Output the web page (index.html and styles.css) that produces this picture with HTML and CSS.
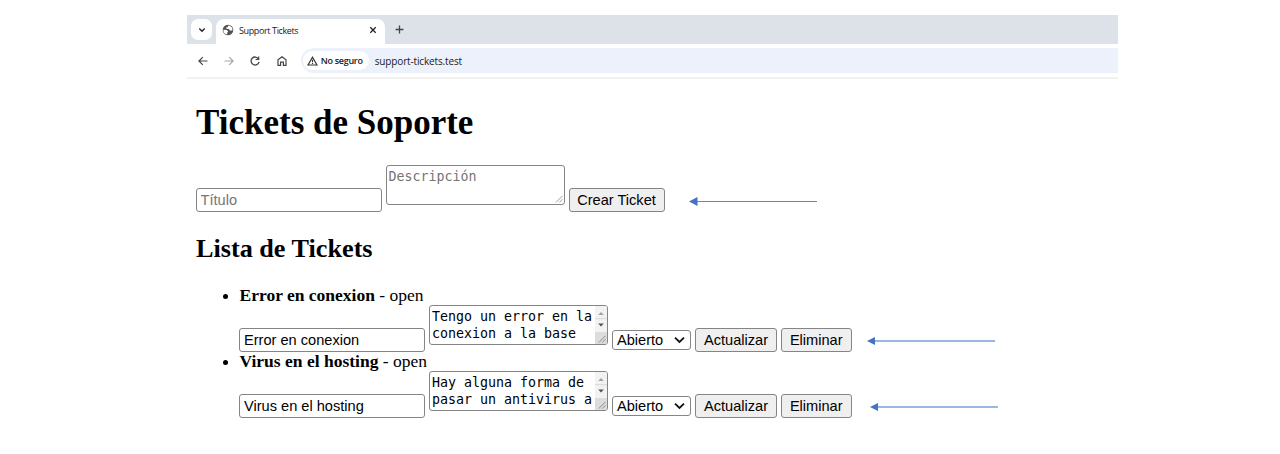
FILE: index.html
```
<!DOCTYPE html>
<html lang="es">
<head>
<meta charset="utf-8">
<title>Support Tickets</title>
<link rel="stylesheet" href="styles.css">
</head>
<body>
<div class="window">
  <header class="browser">
    <div class="tabstrip">
      <div class="tab-search"><svg width="8" height="8" viewBox="0 0 8 8"><path d="M1.3 2.6 4 5.2 6.7 2.6" fill="none" stroke="#222" stroke-width="1.4"/></svg></div>
      <div class="tab">
        <svg class="globe" width="12" height="12" viewBox="0 0 12 12"><circle cx="6" cy="6" r="5.3" fill="#50545a"/><path d="M1.4 5.8 4.8 6.1 6.2 7.4 5.3 8.3 5.2 10.5A4.4 4.4 0 0 1 1.4 5.8ZM6.5 1.6 5.6 3.2 4 3.6 4.7 5 7 5.1 7.8 6.4 10.4 6.6A4.4 4.4 0 0 0 8 2L6.5 1.6Z" fill="#fff"/></svg>
        <span class="tab-title">Support Tickets</span>
        <svg class="close" width="8" height="8" viewBox="0 0 8 8"><path d="M1.3 1.3 6.7 6.7M6.7 1.3 1.3 6.7" stroke="#222" stroke-width="1.3"/></svg>
      </div>
      <svg class="plus" width="9" height="9" viewBox="0 0 9 9"><path d="M4.5 .6V8.4M.6 4.5H8.4" stroke="#444" stroke-width="1.3"/></svg>
    </div>
    <div class="toolbar">
      <svg class="nav" width="12" height="12" viewBox="0 0 12 12"><path d="M10.5 6H2M5.8 2.1 1.9 6 5.8 9.9" fill="none" stroke="#444" stroke-width="1.2"/></svg>
      <svg class="nav" width="12" height="12" viewBox="0 0 12 12"><path d="M1.5 6H10M6.2 2.1 10.1 6 6.2 9.9" fill="none" stroke="#a5a5a5" stroke-width="1.2"/></svg>
      <svg class="nav" width="12" height="12" viewBox="0 0 12 12"><path d="M9.5 3.9A4 4 0 1 0 10 6.9" fill="none" stroke="#444" stroke-width="1.3"/><path d="M10.3 1.4V5.1H6.6V4H9.1V1.4Z" fill="#444"/></svg>
      <svg class="nav" width="12" height="12" viewBox="0 0 12 12"><path d="M2 10.4V4.8L6 1.7 10 4.8V10.4H7.4V7.1H4.6V10.4Z" fill="none" stroke="#444" stroke-width="1.2"/></svg>
      <div class="address">
        <div class="chip">
          <svg width="11" height="10" viewBox="0 0 11 10"><path d="M5.5 1.2 10 9H1Z" fill="none" stroke="#333" stroke-width="1.2"/><path d="M5.5 3.8V6.3M5.5 7V8" stroke="#333" stroke-width="1.1"/></svg>
          <span class="chip-text">No seguro</span>
        </div>
        <span class="url">support-tickets.test</span>
      </div>
    </div>
  </header>
  <main class="page">
    <h1>Tickets de Soporte</h1>
    <form class="row">
      <input class="field" type="text" placeholder="Título">
      <div class="area"><div class="area-text hint">Descripción</div>
        <svg class="grip" width="8" height="8" viewBox="0 0 8 8"><path d="M.8 7.5 7.5 .8M4.3 7.5 7.5 4.3" stroke="#888" stroke-width=".8"/></svg></div>
      <button class="btn create" type="button">Crear Ticket</button>
      <svg class="arrow first" width="128" height="10" viewBox="0 0 128 10"><path d="M6 5.5H128" stroke="#5b87cd"/><path d="M0 5.5 8.5 1V10Z" fill="#4472c4"/></svg>
    </form>
    <h2>Lista de Tickets</h2>
    <ul class="list">
      <li class="item">
        <div class="item-title"><strong>Error en conexion</strong> - open</div>
        <form class="row">
          <input class="field" type="text" value="Error en conexion">
          <div class="area"><div class="area-text">Tengo un error en la<br>conexion a la base</div>
            <div class="scroll"><svg width="12" height="26" viewBox="0 0 12 26"><path d="M3.2 9 6 6 8.8 9Z" fill="#a3a3a3"/><path d="M0 12.7H12" stroke="#d8d8d8"/><path d="M3.2 17.5H8.8L6 20.5Z" fill="#505050"/></svg></div>
            <svg class="grip" width="8" height="8" viewBox="0 0 8 8"><path d="M.8 7.5 7.5 .8M4.3 7.5 7.5 4.3" stroke="#777" stroke-width=".8"/></svg></div>
          <div class="select">Abierto<svg width="11" height="8" viewBox="0 0 11 8"><path d="M1 1.6 5.5 6 10 1.6" fill="none" stroke="#111" stroke-width="1.8"/></svg></div>
          <button class="btn update" type="button">Actualizar</button>
          <button class="btn delete" type="button">Eliminar</button>
          <svg class="arrow second" width="128" height="10" viewBox="0 0 128 10"><path d="M6 5H128" stroke="#9ab6e2" stroke-width="2"/><path d="M0 5 8 1V9Z" fill="#4472c4"/></svg>
        </form>
      </li>
      <li class="item">
        <div class="item-title"><strong>Virus en el hosting</strong> - open</div>
        <form class="row">
          <input class="field" type="text" value="Virus en el hosting">
          <div class="area"><div class="area-text">Hay alguna forma de<br>pasar un antivirus a</div>
            <div class="scroll"><svg width="12" height="26" viewBox="0 0 12 26"><path d="M3.2 9 6 6 8.8 9Z" fill="#a3a3a3"/><path d="M0 12.7H12" stroke="#d8d8d8"/><path d="M3.2 17.5H8.8L6 20.5Z" fill="#505050"/></svg></div>
            <svg class="grip" width="8" height="8" viewBox="0 0 8 8"><path d="M.8 7.5 7.5 .8M4.3 7.5 7.5 4.3" stroke="#777" stroke-width=".8"/></svg></div>
          <div class="select">Abierto<svg width="11" height="8" viewBox="0 0 11 8"><path d="M1 1.6 5.5 6 10 1.6" fill="none" stroke="#111" stroke-width="1.8"/></svg></div>
          <button class="btn update" type="button">Actualizar</button>
          <button class="btn delete" type="button">Eliminar</button>
          <svg class="arrow third" width="128" height="10" viewBox="0 0 128 10"><path d="M6 5H128" stroke="#9ab6e2" stroke-width="2"/><path d="M0 5 8 1V9Z" fill="#4472c4"/></svg>
        </form>
      </li>
    </ul>
  </main>
</div>
</body>
</html>
```
FILE: styles.css
```
* { box-sizing: border-box; }
body { margin: 0; padding: 15px 0 0 187px; min-height: 454px; background: #fff; color: #000; }
svg { display: block; flex: none; }
.window { width: 931px; }

.browser { font-family: "Open Sans", "Noto Sans", sans-serif; color: #222; }
.tabstrip { height: 29px; background: #dde1e8; display: flex; align-items: center; padding-left: 4px; }
.tab-search { width: 21px; height: 21px; border-radius: 7px; background: #fff; display: flex; align-items: center; justify-content: center; }
.tab { width: 169px; height: 25px; margin: 4px 0 0 4px; border-radius: 8px 8px 0 0; background: #fff; display: flex; align-items: center; padding: 0 8px 3px 6px; }
.tab-title { font-size: 9px; letter-spacing: -0.38px; margin-left: 5px; flex: 1; white-space: nowrap; }
.plus { margin-left: 10px; }
.toolbar { height: 35px; border-bottom: 2px solid #f1f1f1; display: flex; align-items: center; padding-left: 10px; }
.nav { margin-right: 14.2px; }
.address { flex: 1; height: 25px; margin-left: -1px; border-radius: 12.5px 0 0 12.5px; background: #ecf1fb; display: flex; align-items: center; padding-left: 2px; }
.chip { width: 66px; height: 19px; border-radius: 10px; background: #fff; display: flex; align-items: center; padding-left: 4px; gap: 3px; white-space: nowrap; }
.chip-text { font-size: 9px; font-weight: 600; letter-spacing: -0.3px; }
.url { font-size: 10px; letter-spacing: -0.15px; margin-left: 6px; }

.page { padding-left: 9px; font-family: "Liberation Serif", "Times New Roman", serif; font-size: 17.5px; }
h1 { margin: 0; padding-top: 24px; font-size: 35px; line-height: 40px; height: 86px; }
h2 { margin: 0; height: 73px; padding-top: 22px; font-size: 26.2px; line-height: 30px; }
.row { display: flex; align-items: flex-start; height: 47px; margin-left: -0.5px; }
.field { width: 186px; height: 24px; margin: 23px 4px 0 0; padding: 0 4px; border: 1px solid #858585; border-radius: 3px; font: 14.6px "Liberation Sans", Arial, sans-serif; color: #000; background: #fff; }
.field::placeholder { color: #757575; }
.area { position: relative; width: 179px; height: 40px; margin-right: 4px; border: 1px solid #858585; border-radius: 3px; background: #fff; overflow: hidden; }
.area-text { padding: 3px 0 0 2px; font: 13.3px/16.5px "DejaVu Sans Mono", monospace; white-space: nowrap; }
.hint { color: #757575; }
.scroll { position: absolute; top: 0; right: 0; width: 12px; height: 38px; background: linear-gradient(#f2f2f2 26px, #dcdcdc 26px); }
.grip { position: absolute; right: 1px; bottom: 1px; }
.btn { height: 24px; margin: 23px 4px 0 0; padding: 0; border: 1px solid #858585; border-radius: 3px; background: #efefef; color: #000; font: 14.6px "Liberation Sans", Arial, sans-serif; }
.create { width: 96px; }
.update { width: 82px; }
.delete { width: 70.5px; }
.select { width: 79px; height: 20px; margin: 25px 4px 0 0; padding: 0 5px 0 4px; border: 1px solid #858585; border-radius: 3px; display: flex; align-items: center; justify-content: space-between; font: 14.6px/18px "Liberation Sans", Arial, sans-serif; }
.arrow.first { margin: 31px 0 0 20px; }
.arrow.second { margin: 31px 0 0 11px; }
.arrow.third { margin: 31px 0 0 14px; }
.list { margin: 0; padding: 0 0 0 43.5px; }
.item { height: 66px; }
.item-title { height: 19px; line-height: 19px; }
```
